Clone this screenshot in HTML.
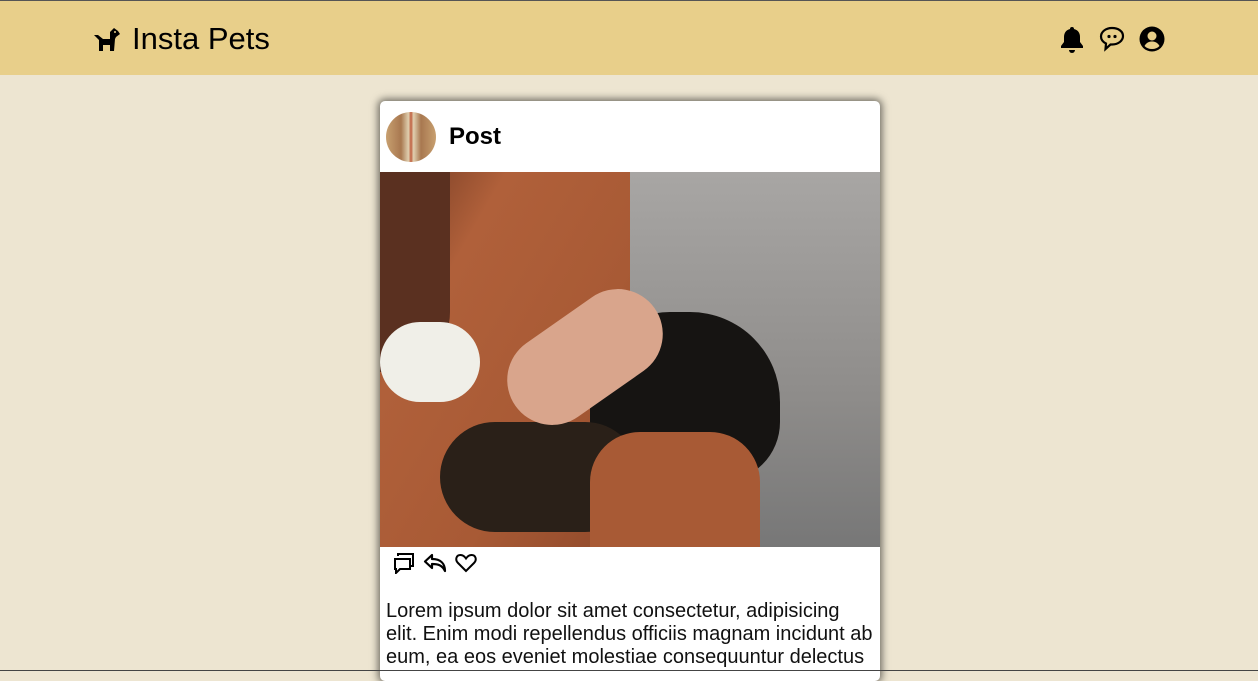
<!DOCTYPE html>
<html><head><meta charset="utf-8"><style>
*{margin:0;padding:0;box-sizing:border-box}
html,body{width:1258px;height:671px;overflow:hidden;background:#ede5d1;font-family:"Liberation Sans",Arial,sans-serif}
.top{position:absolute;left:0;top:0;width:1258px;height:1px;background:#555}
.bot{position:absolute;left:0;top:670px;width:1258px;height:1px;background:#444;z-index:5}
header{position:absolute;top:1px;left:0;width:1258px;height:74px;background:#e8cf8a}
.logo{position:absolute;left:93px;top:20px;font-size:31px;color:#000;white-space:nowrap}
.logo svg{vertical-align:-3px;margin-right:11px}
.icons{position:absolute;left:1059px;top:25px}
.icons svg{position:absolute}
.card{position:absolute;left:380px;top:101px;width:500px;height:580px;background:#fff;border-radius:5px;box-shadow:0 0 8px 2px rgba(0,0,0,.55);overflow:hidden}
.av{position:absolute;left:6px;top:11px;width:50px;height:50px;border-radius:50%;background:linear-gradient(90deg,#c8a070,#a87850 30%,#e0d0b0 45%,#c06040 50%,#e0d0b0 55%,#a87850 70%,#c8a070)}
.title{position:absolute;left:69px;top:22px;font-size:24px;font-weight:bold}
.photo{position:absolute;left:0;top:71px;width:500px;height:375px;background:#9a9896;overflow:hidden}
.txt{position:absolute;left:6px;top:499px;width:490px;font-size:20px;line-height:23px;color:#111}
</style></head><body>
<div class="top"></div>
<header>
<div class="logo"><svg width="28" height="26" viewBox="0 0 28 26"><path d="M1 9 L5 9 L10 13 L17 13 L17 6 L21 2 L25 5 L27 8 L23 11 L22 13 L21 25 L17 25 L17 19 L10 19 L10 25 L6 25 L6 14 Z" fill="#000"/><circle cx="22" cy="6" r="1" fill="#e8cf8a"/></svg>Insta Pets</div>
<div class="icons">
<svg style="left:0;top:0" width="26" height="28" viewBox="0 0 26 28"><path d="M13 1a2 2 0 0 1 2 2c4 1 6 4 6 8v5l3 4v2H2v-2l3-4v-5c0-4 2-7 6-8a2 2 0 0 1 2-2z" fill="#000"/><path d="M10 24h6a3 3 0 0 1-6 0z" fill="#000"/></svg>
<svg style="left:40px;top:0" width="26" height="26" viewBox="0 0 26 26"><path d="M13 2C6.5 2 2 6 2 10.5c0 3 2 5.5 5 7L6.5 23l5-4.5c.5 0 1 0 1.5 0 6.5 0 11-4 11-8.5S19.5 2 13 2z" fill="none" stroke="#000" stroke-width="2.2"/><circle cx="10" cy="10.5" r="1.6"/><circle cx="16" cy="10.5" r="1.6"/></svg>
<svg style="left:80px;top:0" width="26" height="26" viewBox="0 0 26 26"><circle cx="13" cy="13" r="12.5" fill="#000"/><circle cx="13" cy="10" r="4.5" fill="#e8cf8a"/><path d="M5.5 20c2-3.5 4.5-4.5 7.5-4.5s5.5 1 7.5 4.5c-2 2-4.5 3-7.5 3s-5.5-1-7.5-3z" fill="#e8cf8a"/></svg>
</div>
</header>
<div class="card">
<div class="av"></div>
<div class="title">Post</div>
<div class="photo">
<div style="position:absolute;left:0;top:0;width:290px;height:375px;background:linear-gradient(120deg,#6a3520 0%,#b0603a 25%,#a85a35 60%,#8a4528 100%)"></div>
<div style="position:absolute;left:250px;top:0;width:250px;height:375px;background:linear-gradient(180deg,#a8a6a4,#8e8c8a 60%,#777)"></div>
<div style="position:absolute;left:0;top:0;width:70px;height:200px;background:#5a3020;border-radius:0 0 60px 0"></div>
<div style="position:absolute;left:0;top:150px;width:100px;height:80px;background:#f0efe8;border-radius:40px"></div>
<div style="position:absolute;left:210px;top:140px;width:190px;height:170px;background:#161412;border-radius:80px 90px 60px 60px"></div>
<div style="position:absolute;left:60px;top:250px;width:200px;height:110px;background:#2a2018;border-radius:60px"></div>
<div style="position:absolute;left:120px;top:140px;width:170px;height:90px;background:#d9a58c;border-radius:50px;transform:rotate(-35deg)"></div>
<div style="position:absolute;left:210px;top:260px;width:170px;height:115px;background:#a85a35;border-radius:50px 50px 0 0"></div>
</div>
<svg style="position:absolute;left:13px;top:451px" width="22" height="22" viewBox="0 0 22 22" fill="none" stroke="#000" stroke-width="2"><path d="M5 4V2h15v12h-2"/><path d="M2 7h15v10H7l-4 4v-4H2z"/></svg>
<svg style="position:absolute;left:43px;top:451px" width="24" height="22" viewBox="0 0 24 22" fill="none" stroke="#000" stroke-width="2.2" stroke-linejoin="round"><path d="M9 3L2 9.5 9 16V12c6 0 10 1 13 7 0-7-4-12-13-12z"/></svg>
<svg style="position:absolute;left:75px;top:452px" width="22" height="20" viewBox="0 0 22 20" fill="none" stroke="#000" stroke-width="2"><path d="M11 18L3 10C0 7 1 2 5.5 2 8 2 10 4 11 5.5 12 4 14 2 16.5 2 21 2 22 7 19 10z"/></svg>
<div class="txt">Lorem ipsum dolor sit amet consectetur, adipisicing<br>elit. Enim modi repellendus officiis magnam incidunt ab<br>eum, ea eos eveniet molestiae consequuntur delectus</div>
</div>
<div class="bot"></div>
</body></html>
